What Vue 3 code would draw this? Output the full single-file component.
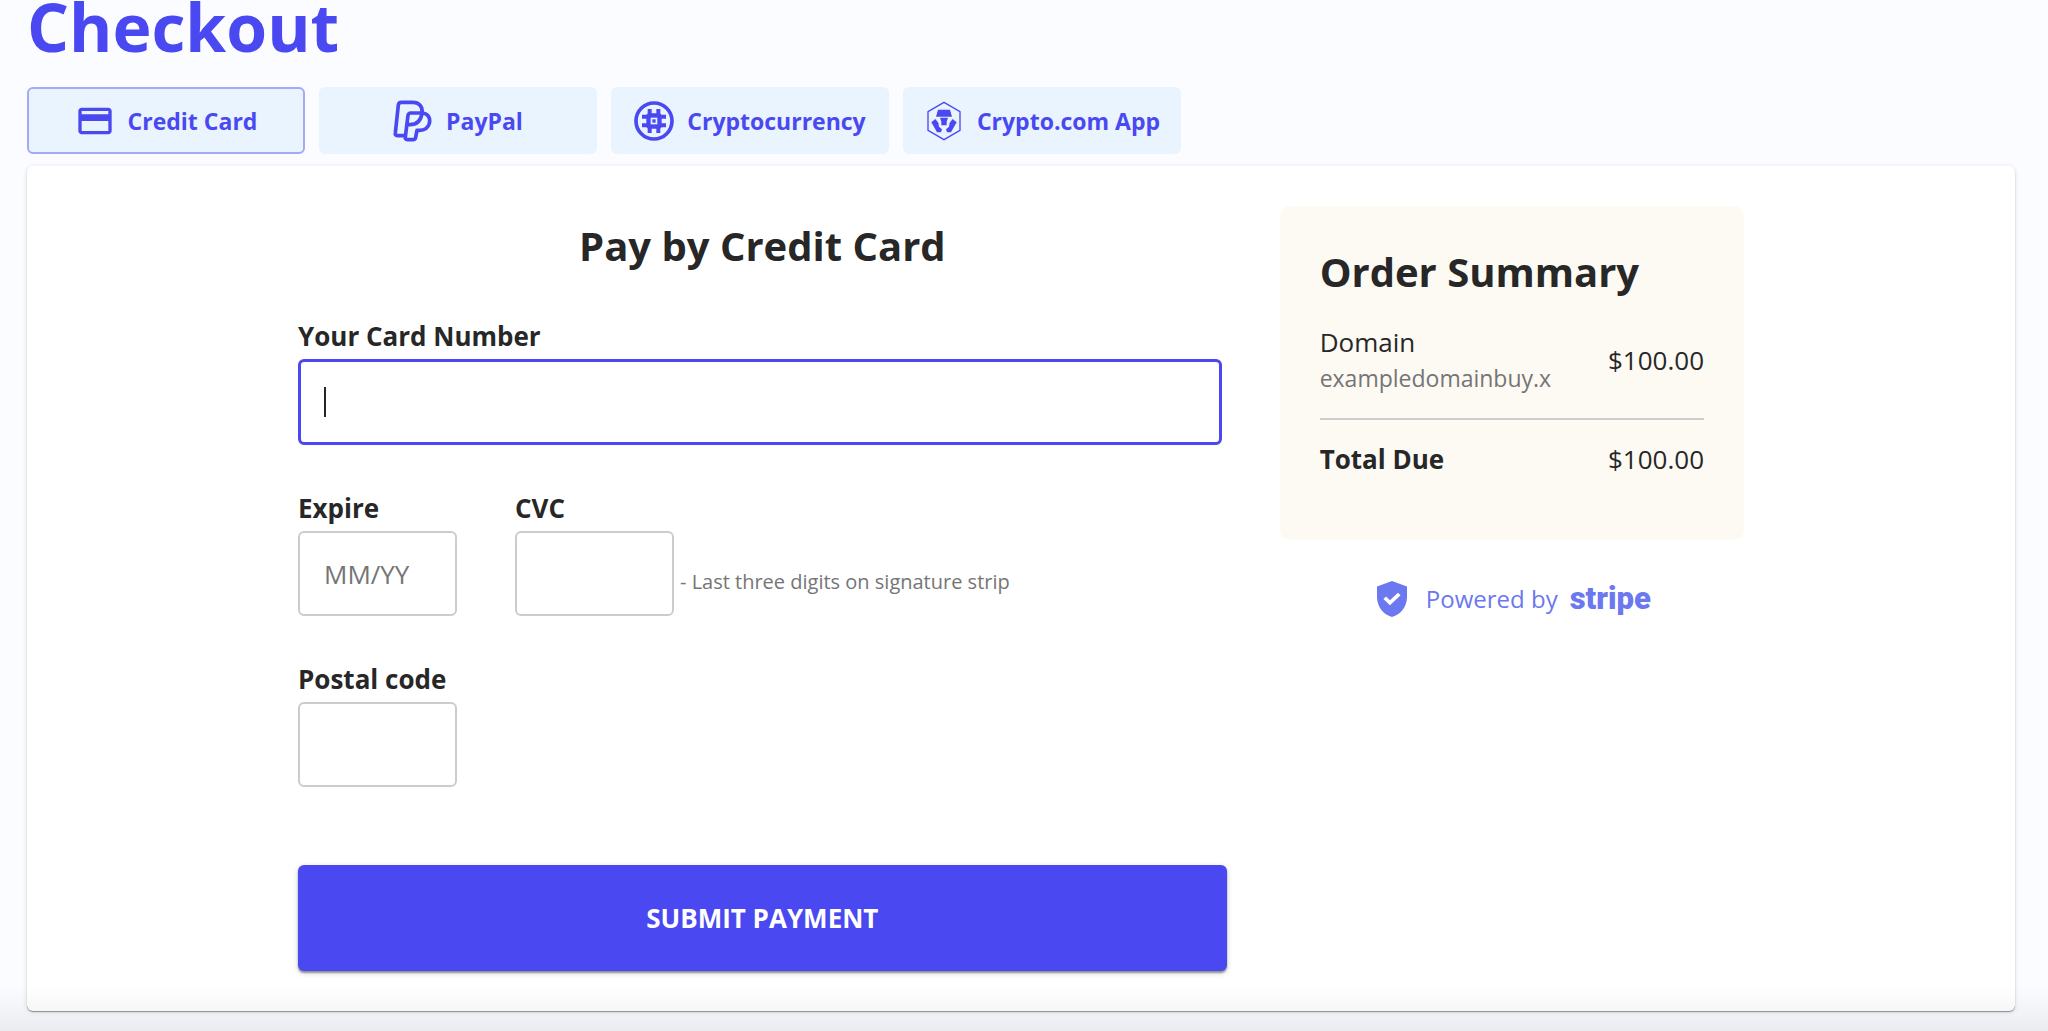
<template>
  <div class="page">
    <h1>Checkout</h1>

    <div class="tabs">
      <button
        v-for="m in methods"
        :key="m.id"
        type="button"
        class="tab"
        :class="{ active: method === m.id }"
        @click="method = m.id"
      >
        <svg v-if="m.id === 'card'" class="icon" viewBox="0 0 24 24" fill="currentColor">
          <path d="M20 4H4c-1.11 0-1.99.89-1.99 2L2 18c0 1.11.89 2 2 2h16c1.11 0 2-.89 2-2V6c0-1.11-.89-2-2-2zm0 14H4v-6h16v6zm0-10H4V6h16v2z" />
        </svg>
        <svg v-else-if="m.id === 'paypal'" class="icon" viewBox="0 0 120 120" fill="none" stroke="currentColor" stroke-width="11" stroke-linejoin="round">
          <path d="M37 104H13c-5 0-7-3-6-8L16 12c1-6 4-8 9-8h34c19 0 31 12 28 32-3 24-16 35-37 35H44" />
          <path d="M87 36c19 2 26 15 22 31-4 15-15 21-30 21h-7l-4 21c-1 5-3 7-8 7H43c-5 0-7-3-6-8l8-65c1-5 3-7 8-7z" />
        </svg>
        <svg v-else-if="m.id === 'crypto'" class="icon" viewBox="0 0 120 120" fill="currentColor">
          <circle cx="60" cy="60" r="54" fill="none" stroke="currentColor" stroke-width="11" />
          <path d="M41 24h12v72H41zM67 24h12v72H67zM24 41h72v12H24zM24 67h72v12H24z" />
          <path d="M42 37h36l5 5v36l-5 5H42l-5-5V42z" />
          <path d="M50 50h20v20H50z" fill="#e9f4ff" />
          <path d="M55 55h10v10H55z" />
        </svg>
        <svg v-else class="icon" viewBox="0 0 120 120" fill="currentColor">
          <path d="M60 4l48 28v56l-48 28-48-28V32z" fill="none" stroke="currentColor" stroke-width="4" />
          <path d="M42 26h36l6 21H36zM48 50h24l-4 12v11H52V62zM22 64l12-10 9 11 2 12 9 8-3 9H39zM98 64L86 54l-9 11-2 12-9 8 3 9h12z" />
        </svg>
        <span>{{ m.label }}</span>
      </button>
    </div>

    <main class="panel">
      <div class="content">
        <form @submit.prevent>
          <h2>Pay by Credit Card</h2>
          <div class="field">
            <label for="number">Your Card Number</label>
            <div class="number">
              <input id="number" v-model="number" type="text" />
              <span v-if="!number" class="caret"></span>
            </div>
          </div>
          <div class="row">
            <div class="field">
              <label for="expire">Expire</label>
              <input id="expire" v-model="expire" class="small" type="text" placeholder="MM/YY" />
            </div>
            <div class="field">
              <label for="cvc">CVC</label>
              <div class="cvc">
                <input id="cvc" v-model="cvc" class="small" type="text" />
                <span class="hint">- Last three digits on signature strip</span>
              </div>
            </div>
          </div>
          <div class="field">
            <label for="postal">Postal code</label>
            <input id="postal" v-model="postal" class="small" type="text" />
          </div>
          <button class="submit" type="submit">SUBMIT PAYMENT</button>
        </form>

        <aside>
          <div class="summary">
            <h2>Order Summary</h2>
            <div class="line">
              <div>
                <div>Domain</div>
                <div class="domain">exampledomainbuy.x</div>
              </div>
              <div>$100.00</div>
            </div>
            <div class="line total">
              <strong>Total Due</strong>
              <div>$100.00</div>
            </div>
          </div>
          <div class="powered">
            <svg class="shield" viewBox="4 2 16 20" preserveAspectRatio="none" fill="currentColor">
              <path d="M12 2L4 5v6.09c0 5.05 3.41 9.76 8 10.91 4.59-1.15 8-5.86 8-10.91V5l-8-3zm-1.06 13.54L7.4 12l1.41-1.41 2.12 2.12 4.24-4.24 1.41 1.41-5.64 5.66z" />
            </svg>
            <span>Powered by</span>
            <span class="stripe">stripe</span>
          </div>
        </aside>
      </div>
    </main>
    <div class="fade"></div>
  </div>
</template>

<script setup>
import { ref } from 'vue';

const methods = [
  { id: 'card', label: 'Credit Card' },
  { id: 'paypal', label: 'PayPal' },
  { id: 'crypto', label: 'Cryptocurrency' },
  { id: 'app', label: 'Crypto.com App' },
];
const method = ref('card');
const number = ref('');
const expire = ref('');
const cvc = ref('');
const postal = ref('');
</script>

<style>
body {
  margin: 0;
  background: #fbfcff;
}
</style>

<style scoped>
.page {
  padding: 0 33px 19px 27px;
  color: #272727;
  font-family: "Open Sans", "Noto Sans", sans-serif;
  font-size: 26px;
}
.page * {
  box-sizing: border-box;
}
h1 {
  margin: 0 0 35px;
  color: #4a48f0;
  font-size: 66px;
  line-height: 52px;
}
h2 {
  margin: 0;
  font-size: 40px;
  line-height: 52px;
}
button,
input {
  font-family: inherit;
}
.tabs {
  display: flex;
  gap: 14px;
  margin-bottom: 12px;
}
.tab {
  display: flex;
  align-items: center;
  justify-content: center;
  gap: 13px;
  width: 278px;
  height: 67px;
  padding: 0;
  border: 2px solid transparent;
  border-radius: 6px;
  background: #e9f4ff;
  color: #4a48f0;
  font-size: 23px;
  font-weight: 700;
  white-space: nowrap;
  cursor: pointer;
}
.tab.active {
  border-color: #a0aaf8;
}
.icon {
  width: 40px;
  height: 40px;
  overflow: visible;
}
.panel {
  padding: 40px;
  border-radius: 6px;
  background: #fff;
  box-shadow: 0 1px 1px #00000060, 0 1px 5px #0000001f;
}
.content {
  display: grid;
  grid-template-columns: 2fr 1fr;
  gap: 53px;
  align-items: start;
  max-width: 1446px;
  margin: 0 auto;
}
form {
  display: flex;
  flex-direction: column;
  gap: 47px;
}
form h2 {
  margin-bottom: -13px;
  line-height: 80px;
  text-align: center;
}
.field {
  display: flex;
  flex-direction: column;
  gap: 7px;
}
label {
  font-weight: 700;
  line-height: 32px;
}
input {
  width: 100%;
  height: 85px;
  padding: 0 24px;
  border: 2px solid #ccc;
  border-radius: 6px;
  background: #fff;
  color: #272727;
  font-size: 26px;
  outline: none;
}
input::placeholder {
  color: #757575;
  opacity: 1;
}
.small {
  width: 159px;
}
.number {
  position: relative;
  padding-right: 5px;
}
.number input {
  display: block;
  height: 86px;
  border: 3px solid #4a48f0;
}
.caret {
  position: absolute;
  top: 28px;
  left: 26px;
  width: 2px;
  height: 30px;
  background: #272727;
}
.row {
  display: flex;
  gap: 58px;
}
.cvc {
  display: flex;
  align-items: flex-end;
  gap: 6px;
}
.hint {
  margin-bottom: 20px;
  color: #757575;
  font-size: 20px;
  line-height: 28px;
}
.submit {
  height: 106px;
  margin-top: 31px;
  border: 0;
  border-radius: 6px;
  background: #4a48f0;
  box-shadow: 0 2px 2px #00000060, 0 2px 6px #00000026;
  color: #fff;
  font-size: 26px;
  font-weight: 700;
  cursor: pointer;
}
.summary {
  padding: 40px 40px 63px;
  border-radius: 10px;
  background: #fdf9f3;
}
.line {
  display: flex;
  align-items: center;
  justify-content: space-between;
  margin-top: 26px;
  line-height: 36px;
}
.line.total {
  margin-top: 22px;
  padding-top: 21px;
  border-top: 2px solid #ccc;
}
.domain {
  color: #757575;
  font-size: 23px;
}
.powered {
  display: flex;
  align-items: center;
  justify-content: center;
  margin-top: 41px;
  padding-left: 4px;
  color: #6b78f0;
  font-size: 24px;
  font-weight: 500;
  line-height: 36px;
}
.shield {
  width: 30px;
  height: 36px;
  margin-right: 19px;
}
.stripe {
  margin-left: 12px;
  font-family: Roboto, "Open Sans", sans-serif;
  font-size: 31px;
  font-weight: 900;
}
.fade {
  position: fixed;
  right: 0;
  bottom: 0;
  left: 0;
  height: 44px;
  background: linear-gradient(#00000000, #00000010);
  pointer-events: none;
}
</style>
